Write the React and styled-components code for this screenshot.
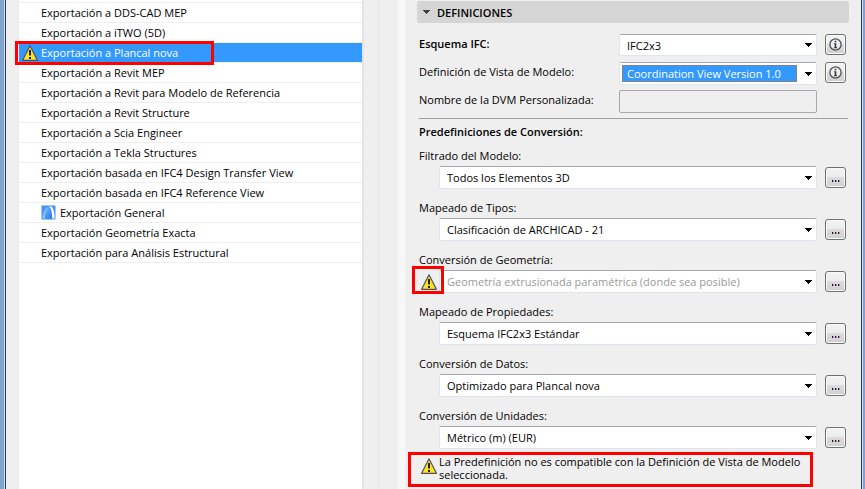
import React, { useState } from 'react';
import styled, { createGlobalStyle, css } from 'styled-components';

const GlobalStyle = createGlobalStyle`
  body {
    margin: 0;
    background: #efefef;
    color: #000;
  }

  *, *::before, *::after {
    box-sizing: border-box;
  }

  body, button, select, input {
    font-family: 'Open Sans', 'Noto Sans', sans-serif;
    font-size: 11px;
  }
`;

const Frame = styled.div`
  background: #7fa5cd;
  padding: 0 2px 0 4px;
`;

const FrameEdge = styled.div`
  border-left: 1px solid #c8dcf0;
  border-right: 1px solid #c8dcf0;
  background: #efefef;
`;

const Window = styled.div`
  display: grid;
  grid-template-columns: minmax(0, 343fr) 43px minmax(0, 456fr);
  min-height: 100vh;
  padding-left: 13px;
  border-left: 1px solid #2b3a4b;
  border-right: 1px solid #2b3a4b;
`;

const TranslatorList = styled.ul`
  margin: 0;
  padding: 0;
  list-style: none;
  background: #fff;
  box-shadow: 1px 0 2px #d8d8d8;

  &::before {
    content: '';
    display: block;
    height: 3px;
    border-bottom: 1px solid #efefef;
  }
`;

const TranslatorItem = styled.li`
  position: relative;
  border-bottom: 1px solid #efefef;
`;

const TranslatorButton = styled.button`
  display: grid;
  grid-template-columns: 16px 1fr;
  gap: 3px;
  align-items: center;
  width: 100%;
  height: 19px;
  padding: 0 3px;
  border: none;
  background: ${({ $active }) => ($active ? '#3399ff' : '#fff')};
  color: ${({ $active }) => ($active ? '#fff' : '#000')};
  text-align: left;
  white-space: nowrap;
`;

const TranslatorName = styled.span`
  display: flex;
  align-items: center;
  gap: 4px;
`;

const IconSlot = styled.span`
  display: flex;
  align-items: center;
`;

const Splitter = styled.div`
  margin-left: 16px;
  border-left: 1px solid #e6e6e6;
  border-right: 7px solid #f7f7f7;
`;

const Panel = styled.section`
  padding: 1px 12px 0;
`;

const PanelHeader = styled.button`
  display: flex;
  align-items: center;
  gap: 7px;
  width: 100%;
  height: 22px;
  padding: 0 6px;
  border: none;
  border-radius: 3px;
  background: #d5d5d5;
  font-weight: 600;
`;

const PanelBody = styled.div`
  padding: 11px 1px 0 2px;
`;

const SchemaRow = styled.div`
  display: grid;
  grid-template-columns: 200px minmax(0, 1fr) 29px;
  align-items: start;
  height: 28px;
  padding-right: 2px;
`;

const SchemaLabel = styled.label`
  line-height: 19px;
  font-weight: ${({ $bold }) => ($bold ? '600' : 'normal')};
`;

const fieldBorder = css`
  border: 1px solid #dfe4ee;
  border-top-color: #a6a8b0;
  border-radius: 2px;
`;

const SelectBox = styled.div`
  ${fieldBorder}
  display: flex;
  align-items: center;
  gap: 8px;
  height: ${({ $tall }) => ($tall ? '23px' : '22px')};
  padding: 2px 4px 2px 2px;
  background: #fff;
`;

const Select = styled.select`
  flex: 1;
  min-width: 0;
  height: 100%;
  padding: ${({ $highlight }) => ($highlight ? '0 4px' : '0 5px')};
  border: ${({ $highlight }) => ($highlight ? '1px dotted #d06a10' : 'none')};
  border-radius: 0;
  appearance: none;
  background: ${({ $highlight }) => ($highlight ? '#3399ff' : 'transparent')};
  color: ${({ $highlight, $muted }) =>
    $highlight ? '#fff' : $muted ? '#9a9a9a' : '#000'};

  option {
    background: #fff;
    color: #000;
  }
`;

const TextField = styled.input`
  width: 100%;
  height: 23px;
  border: 1px solid #a8a8ac;
  border-radius: 2px;
  background: #efefef;
`;

const SmallButton = styled.button`
  display: flex;
  align-items: center;
  justify-content: center;
  width: 21px;
  height: 21px;
  margin-left: 8px;
  padding: 0;
  border: 1px solid #707070;
  border-radius: 3px;
  background: linear-gradient(#f3f3f3 0%, #ececec 49%, #dcdcdc 50%, #cfcfcf 100%);
  box-shadow: inset 0 0 0 1px #fafafa;
`;

const DotsIcon = styled.svg`
  margin-top: 6px;
`;

const Presets = styled.div`
  padding-top: 5px;
  border-top: 1px solid #a0a0a0;
`;

const PresetsTitle = styled.h2`
  margin: 0 0 8px;
  font-size: 11px;
  font-weight: 600;
  line-height: 16px;
`;

const Preset = styled.div`
  margin-bottom: ${({ $last }) => ($last ? '3px' : '11px')};
`;

const PresetLabel = styled.label`
  display: block;
  margin-bottom: 2px;
  line-height: 16px;
`;

const PresetRow = styled.div`
  position: relative;
  display: grid;
  grid-template-columns: 20px minmax(0, 1fr) 29px;
  align-items: center;
  padding-right: 2px;

  ${IconSlot} {
    padding-left: 2px;
  }
`;

const Marker = styled.span`
  position: absolute;
  z-index: 1;
  top: ${({ $top }) => $top}px;
  left: ${({ $left }) => $left}px;
  width: ${({ $width }) => $width}px;
  height: ${({ $height }) => $height}px;
  border: 3px solid #ff0000;
  pointer-events: none;
`;

const Warning = styled.div`
  display: flex;
  align-items: flex-start;
  gap: 2px;
  margin: 0 35px 0 -11px;
  padding: 0 2px 3px 10px;
  border: 3px solid #ff0000;
`;

const WarningText = styled.p`
  margin: 0;
  line-height: 13px;
`;

const WarningSvg = styled.svg`
  flex-shrink: 0;
`;

const WarningIconSlot = styled(IconSlot)`
  padding-top: 3px;
`;

const WarningIcon = () => (
  <WarningSvg width='16' height='16' viewBox='0 0 16 16'>
    <path
      d='M8 .8 15.4 15.3H.6Z'
      fill='#ffe41c'
      stroke='#4b4f68'
      strokeWidth='1.2'
      strokeLinejoin='round'
    />
    <path d='M7 5h2v5.5H7ZM7 12h2v2H7Z' fill='#20202c' />
  </WarningSvg>
);

const ArchicadIcon = () => (
  <svg width='15' height='15' viewBox='0 0 15 15'>
    <defs>
      <linearGradient id='arc' x1='0' y1='0' x2='1' y2='1'>
        <stop offset='0' stopColor='#7db6ff' />
        <stop offset='1' stopColor='#1f74f2' />
      </linearGradient>
    </defs>
    <rect x='.5' y='.5' width='14' height='14' rx='1' fill='#4a93f8' stroke='#9cc8ff' />
    <path d='M1.5 13.5C2 7 4.500 2.500 8.500 1.500 6 4 4.300 8 4 13.500Z' fill='#8fc0ff' />
    <path d='M3.800 13.500C4.500 7 6 3 9 1.500L11 5 11.500 13.500Z' fill='url(#arc)' />
    <path d='M8.500 1.500H10.500C12.800 4 13.500 8.500 13.700 13.500H11.200C11.200 8 10.500 4 8.500 1.500Z' fill='#fff' />
  </svg>
);

const InfoIcon = () => (
  <svg width='15' height='15' viewBox='0 0 15 15'>
    <circle cx='7.5' cy='7.5' r='5.6' fill='#eee' stroke='#4a4e55' strokeWidth='1.3' />
    <path d='M6.700 3.700h1.600v1.500H6.700ZM6 6.300h2.300v4H9.200v.9H5.900v-.9h.8V7.200H6Z' fill='#33373e' />
  </svg>
);

const Arrow = ({ color = '#000' }) => (
  <svg width='7' height='4' viewBox='0 0 7 4' shapeRendering='crispEdges'>
    <path d='M0 0h7v1H6v1H5v1H4v1H3V3H2V2H1V1H0Z' fill={color} />
  </svg>
);

const Dots = () => (
  <DotsIcon width='8' height='2' viewBox='0 0 8 2' shapeRendering='crispEdges'>
    <path d='M0 0h1v2H0ZM3 0h1v2H3ZM6 0h1v2H6Z' fill='#2a1040' />
    <path d='M1 0h1v2H1ZM4 0h1v2H4ZM7 0h1v2H7Z' fill='#a79aa6' />
  </DotsIcon>
);

const translators = [
  { name: 'Exportación a DDS-CAD MEP' },
  { name: 'Exportación a iTWO (5D)' },
  { name: 'Exportación a Plancal nova', warning: true },
  { name: 'Exportación a Revit MEP' },
  { name: 'Exportación a Revit para Modelo de Referencia' },
  { name: 'Exportación a Revit Structure' },
  { name: 'Exportación a Scia Engineer' },
  { name: 'Exportación a Tekla Structures' },
  { name: 'Exportación basada en IFC4 Design Transfer View' },
  { name: 'Exportación basada en IFC4 Reference View' },
  { name: 'Exportación General', archicad: true },
  { name: 'Exportación Geometría Exacta' },
  { name: 'Exportación para Análisis Estructural' },
];

const presets = [
  { id: 'filter', label: 'Filtrado del Modelo:', value: 'Todos los Elementos 3D' },
  { id: 'types', label: 'Mapeado de Tipos:', value: 'Clasificación de ARCHICAD - 21' },
  {
    id: 'geometry',
    label: 'Conversión de Geometría:',
    value: 'Geometría extrusionada paramétrica (donde sea posible)',
    warning: true,
  },
  { id: 'properties', label: 'Mapeado de Propiedades:', value: 'Esquema IFC2x3 Estándar' },
  { id: 'data', label: 'Conversión de Datos:', value: 'Optimizado para Plancal nova' },
  { id: 'units', label: 'Conversión de Unidades:', value: 'Métrico (m) (EUR)' },
];

const App = () => {
  const [selected, setSelected] = useState('Exportación a Plancal nova');
  const [open, setOpen] = useState(true);

  return (
    <Frame>
      <GlobalStyle />
      <FrameEdge>
        <Window>
          <TranslatorList>
            {translators.map(({ name, warning, archicad }) => (
              <TranslatorItem key={name}>
                <TranslatorButton
                  $active={name === selected}
                  onClick={() => setSelected(name)}
                >
                  <IconSlot>{warning && <WarningIcon />}</IconSlot>
                  <TranslatorName>
                    {archicad && <ArchicadIcon />}
                    {name}
                  </TranslatorName>
                </TranslatorButton>
                {warning && <Marker $top={-2} $left={-4} $width={199} $height={24} />}
              </TranslatorItem>
            ))}
          </TranslatorList>
          <Splitter />
          <Panel>
            <PanelHeader aria-expanded={open} onClick={() => setOpen(!open)}>
              <Arrow color='#404040' />
              DEFINICIONES
            </PanelHeader>
            {open && (
              <PanelBody>
                <SchemaRow>
                  <SchemaLabel htmlFor='schema' $bold>
                    Esquema IFC:
                  </SchemaLabel>
                  <SelectBox>
                    <Select id='schema'>
                      <option>IFC2x3</option>
                    </Select>
                    <Arrow />
                  </SelectBox>
                  <SmallButton>
                    <InfoIcon />
                  </SmallButton>
                </SchemaRow>
                <SchemaRow>
                  <SchemaLabel htmlFor='mvd'>Definición de Vista de Modelo:</SchemaLabel>
                  <SelectBox $tall>
                    <Select id='mvd' $highlight>
                      <option>Coordination View Version 1.0</option>
                    </Select>
                    <Arrow />
                  </SelectBox>
                  <SmallButton>
                    <InfoIcon />
                  </SmallButton>
                </SchemaRow>
                <SchemaRow>
                  <SchemaLabel htmlFor='custom'>Nombre de la DVM Personalizada:</SchemaLabel>
                  <TextField id='custom' type='text' disabled />
                </SchemaRow>
                <Presets>
                  <PresetsTitle>Predefiniciones de Conversión:</PresetsTitle>
                  {presets.map(({ id, label, value, warning }) => (
                    <Preset key={id} $last={id === 'units'}>
                      <PresetLabel htmlFor={id}>{label}</PresetLabel>
                      <PresetRow>
                        <IconSlot>{warning && <WarningIcon />}</IconSlot>
                        <SelectBox $tall>
                          <Select id={id} $muted={warning}>
                            <option>{value}</option>
                          </Select>
                          <Arrow />
                        </SelectBox>
                        <SmallButton>
                          <Dots />
                        </SmallButton>
                        {warning && <Marker $top={-4} $left={-7} $width={32} $height={28} />}
                      </PresetRow>
                    </Preset>
                  ))}
                </Presets>
                <Warning>
                  <WarningIconSlot>
                    <WarningIcon />
                  </WarningIconSlot>
                  <WarningText>
                    La Predefinición no es compatible con la Definición de Vista de Modelo
                    seleccionada.
                  </WarningText>
                </Warning>
              </PanelBody>
            )}
          </Panel>
        </Window>
      </FrameEdge>
    </Frame>
  );
};

export default App;
